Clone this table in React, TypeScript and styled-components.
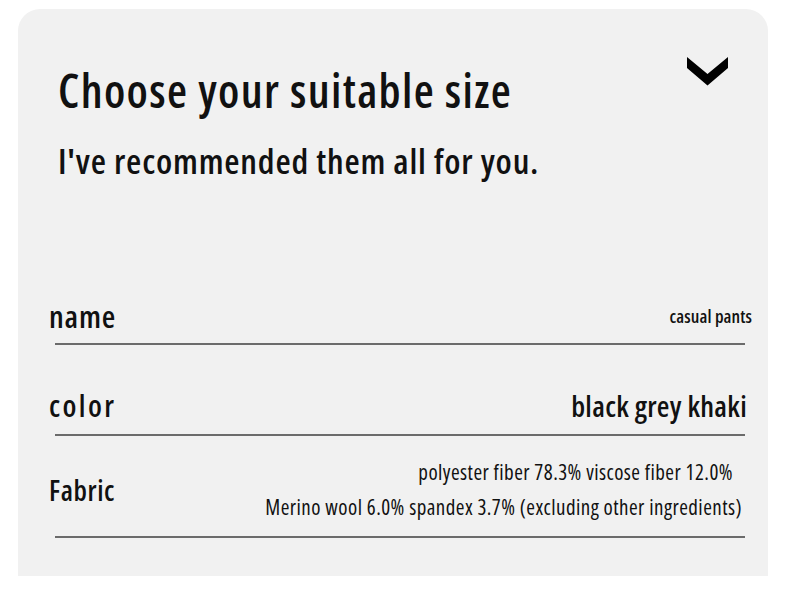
import React from "react";
import styled, { createGlobalStyle } from "styled-components";

const GlobalStyle = createGlobalStyle`
  body {
    margin: 0;
    background: #ffffff;
    font-family: "Open Sans", "Roboto Condensed", sans-serif;
    font-stretch: 75%;
    color: #111111;
  }
`;

const Page = styled.div`
  padding: 9px 22px 0 18px;
`;

const Card = styled.section`
  box-sizing: border-box;
  height: 567px;
  padding: 48px 40px 0 40px;
  background: #f1f1f1;
  border-radius: 22px 22px 0 0;
`;

const Header = styled.header`
  display: flex;
  justify-content: space-between;
  align-items: flex-start;
`;

const Title = styled.h1`
  margin: 5.5px 0 0;
  font-size: 46px;
  font-weight: 600;
  line-height: 1.2;
  letter-spacing: 1.35px;
`;

const Subtitle = styled.h2`
  margin: 22px 0 0;
  font-size: 35px;
  font-weight: 600;
  line-height: 1.2;
  letter-spacing: 0.8px;
`;

const Toggle = styled.button`
  display: flex;
  border: none;
  background: none;
  padding: 0;
  cursor: pointer;
`;

const Specs = styled.div`
  display: flex;
  flex-direction: column;
  margin: 119px -17px 0 -3px;
`;

const Row = styled.div<{ $top: number; $bottom: number }>`
  display: flex;
  justify-content: space-between;
  align-items: center;
  padding: ${p => p.$top}px 0 ${p => p.$bottom}px;
  border-bottom: 2px solid #6b6b6b;
`;

const Label = styled.span<{ $size: number; $track: number }>`
  margin-left: -6px;
  font-size: ${p => p.$size}px;
  font-weight: 600;
  line-height: 1;
  letter-spacing: ${p => p.$track}px;
`;

const Value = styled.span<{ $size: number; $inset: number; $track: number }>`
  margin-right: ${p => p.$inset}px;
  font-size: ${p => p.$size}px;
  font-weight: 600;
  line-height: 1;
  letter-spacing: ${p => p.$track}px;
  text-align: right;
  white-space: nowrap;
`;

const FabricList = styled.div`
  display: flex;
  flex-direction: column;
  align-items: flex-end;
`;

const FabricLine = styled.span<{ $inset: number }>`
  margin-right: ${p => p.$inset}px;
  font-size: 21px;
  font-weight: 500;
  line-height: 35px;
  letter-spacing: 0.45px;
  white-space: nowrap;
`;

const Chevron = () => (
  <svg width="41" height="29" viewBox="0 0 41 29">
    <polygon points="0,0 20.5,17 41,0 41,11 20.5,28.5 0,11" fill="#000" />
  </svg>
);

const App = () => (
  <>
    <GlobalStyle />
    <Page>
      <Card>
        <Header>
          <div>
            <Title>Choose your suitable size</Title>
            <Subtitle>I've recommended them all for you.</Subtitle>
          </div>
          <Toggle aria-label="collapse">
            <Chevron />
          </Toggle>
        </Header>
        <Specs>
          <Row $top={0} $bottom={11.5}>
            <Label $size={31} $track={0.8}>name</Label>
            <Value $size={18} $inset={-7} $track={0.1}>casual pants</Value>
          </Row>
          <Row $top={45.6} $bottom={13.4}>
            <Label $size={30} $track={2.4}>color</Label>
            <Value $size={29} $inset={-2} $track={0.3}>black grey khaki</Value>
          </Row>
          <Row $top={18.4} $bottom={11.6}>
            <Label $size={28} $track={0.6}>Fabric</Label>
            <FabricList>
              <FabricLine $inset={12}>polyester fiber 78.3% viscose fiber 12.0%</FabricLine>
              <FabricLine $inset={3}>
                Merino wool 6.0% spandex 3.7% (excluding other ingredients)
              </FabricLine>
            </FabricList>
          </Row>
        </Specs>
      </Card>
    </Page>
  </>
);

export default App;
